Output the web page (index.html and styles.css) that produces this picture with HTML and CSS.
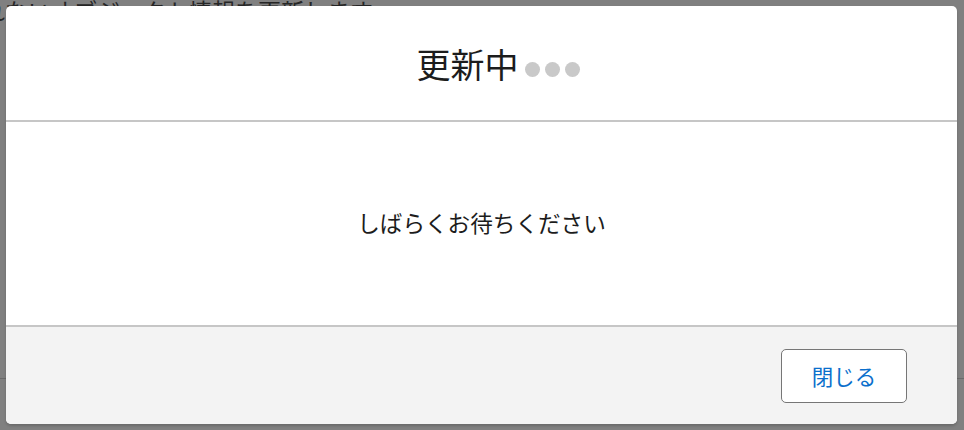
FILE: index.html
```html
<!DOCTYPE html>
<html lang="ja">
<head>
<meta charset="utf-8">
<link rel="stylesheet" href="styles.css">
</head>
<body>
<div class="page">
  <p class="page-text">れないオブジェクト情報を更新します</p>
  <div class="page-rule"></div>
</div>
<div class="modal">
  <div class="modal-header">
    <h2 class="modal-title">更新中<span class="dots"><span class="dot"></span><span class="dot"></span><span class="dot"></span></span></h2>
  </div>
  <div class="modal-body">
    <p class="message">しばらくお待ちください</p>
  </div>
  <div class="modal-footer">
    <button class="btn-close">閉じる</button>
  </div>
</div>
</body>
</html>
```

FILE: styles.css
```css
* { box-sizing: border-box; }
html, body {
  margin: 0;
  padding: 0;
  width: 964px;
  height: 430px;
  overflow: hidden;
}
body {
  background: #808080;
  font-family: "Noto Sans CJK JP", "Noto Sans", sans-serif;
  position: relative;
}
.page {
  display: flex;
  flex-direction: column;
}
.page-text {
  margin: -4px 0 0 -18px;
  font-size: 23px;
  line-height: 28px;
  color: #262626;
  white-space: nowrap;
}
.page-rule {
  margin-top: 354px;
  height: 1px;
  background: #6a6a6a;
}
.modal {
  position: absolute;
  left: 6px;
  top: 6px;
  width: 951px;
  height: 418px;
  background: #ffffff;
  border-radius: 5px;
  box-shadow: 0 2px 3px rgba(0,0,0,0.18);
  display: flex;
  flex-direction: column;
  overflow: hidden;
}
.modal-header {
  height: 116px;
  border-bottom: 2px solid #c6c6c6;
  display: flex;
  align-items: center;
  justify-content: center;
  padding: 0 0 0 33px;
}
.modal-title {
  margin: 0;
  font-size: 34px;
  font-weight: 400;
  color: #1c1c1c;
  display: flex;
  align-items: center;
  line-height: 1;
  position: relative;
  top: 1px;
}
.dots {
  display: flex;
  gap: 5px;
  margin-left: 6px;
  margin-top: 10px;
}
.dot {
  width: 15px;
  height: 15px;
  border-radius: 50%;
  background: #c9c9c9;
}
.modal-body {
  height: 205px;
  border-bottom: 2px solid #c6c6c6;
  display: flex;
  align-items: center;
  justify-content: center;
}
.message {
  margin: 0;
  font-size: 22.6px;
  color: #1c1c1c;
  line-height: 1;
}
.modal-footer {
  flex: 1;
  background: #f3f3f3;
  display: flex;
  justify-content: flex-end;
  align-items: flex-start;
  padding: 22px 50px 0 0;
}
.btn-close {
  width: 126px;
  height: 54px;
  background: #ffffff;
  border: 1px solid #767676;
  border-radius: 5px;
  font-family: "Noto Sans CJK JP", "Noto Sans", sans-serif;
  font-size: 21.5px;
  color: #0b6fcc;
  padding: 0;
  line-height: 1;
}
```
